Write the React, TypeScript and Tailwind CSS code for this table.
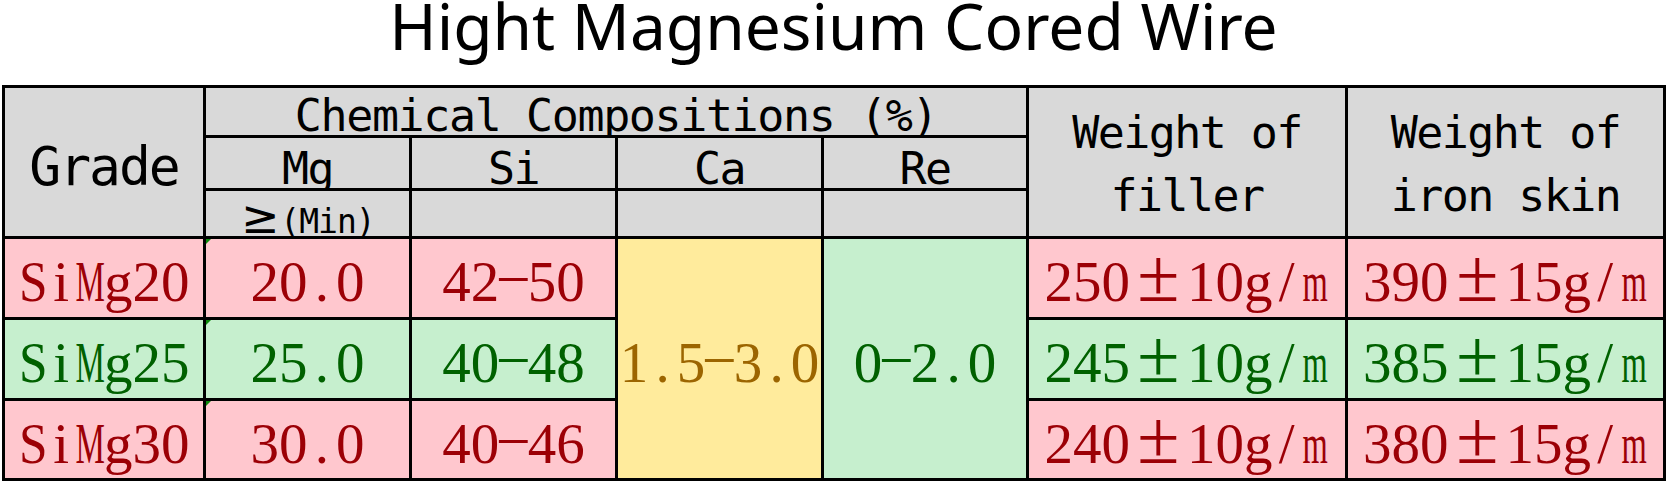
import React from "react";

const PINK = "bg-[#ffc7ce] text-[#9c0006]";
const GREEN = "bg-[#c6efce] text-[#006100]";
const YELLOW = "bg-[#ffeb9c] text-[#9c6500]";

function Mono({ text }: { text: string }) {
  return (
    <span className="whitespace-nowrap">
      {Array.from(text).map((ch, i) => {
        let cls = "inline-flex justify-center w-[0.5em]";
        if (ch === "±") cls = "inline-flex justify-center w-[1em] scale-135 origin-[50%_79%]";
        else if (ch === "M") cls += " scale-x-58";
        else if (ch === "m") cls += " scale-x-57";
        else if (ch === "S") cls += " scale-x-90";
        else if (ch === "-") cls += " scale-x-195 scale-y-70 -translate-y-[6px]";
        return (
          <span key={i} className={cls}>
            {ch}
          </span>
        );
      })}
    </span>
  );
}

function DataCell({
  text,
  tone,
  extra = "",
  mark = false,
}: {
  text: string;
  tone: string;
  extra?: string;
  mark?: boolean;
}) {
  return (
    <div
      className={`relative flex items-center justify-center pt-[8px] text-[57px] leading-[66px] font-['Liberation_Serif',serif] ${tone} ${extra}`}
    >
      {mark && (
        <span className="absolute left-0 top-0 h-0 w-0 border-t-[5px] border-r-[5px] border-t-[#0a8a0a] border-r-transparent" />
      )}
      <Mono text={text} />
    </div>
  );
}

const head = "bg-[#d9d9d9] text-black font-['DejaVu_Sans_Mono',monospace]";

export default function App() {
  const rows = [
    { grade: "SiMg20", mg: "20.0", si: "42-50", filler: "250±10g/m", skin: "390±15g/m", tone: PINK },
    { grade: "SiMg25", mg: "25.0", si: "40-48", filler: "245±10g/m", skin: "385±15g/m", tone: GREEN },
    { grade: "SiMg30", mg: "30.0", si: "40-46", filler: "240±10g/m", skin: "380±15g/m", tone: PINK },
  ];

  return (
    <div className="w-[1667px] h-[483px] overflow-hidden bg-white">
      <div className="h-[85px] text-center text-[64px] leading-[52px] text-black font-['Noto_Sans',sans-serif]">
        Hight Magnesium Cored Wire
      </div>
      <div className="ml-[2px] grid w-fit grid-cols-[198px_203px_203px_203px_202px_316px_315px] grid-rows-[47px_50px_45px_78px_78px_77px] gap-[3px] bg-black p-[3px]">
        <div className={`${head} row-span-3 flex items-center justify-center pt-[9px] text-[53px] leading-[53px] tracking-[-2px]`}>
          Grade
        </div>
        <div className={`${head} col-span-4 overflow-hidden text-center text-[45px] leading-[56px] tracking-[-1.4px] whitespace-pre`}>
          Chemical Compositions (%)
        </div>
        <div className={`${head} row-span-3 flex flex-col items-center justify-center pt-[4px] text-[45px] leading-[63px] tracking-[-1.6px] whitespace-pre`}>
          <span>Weight of</span>
          <span>filler</span>
        </div>
        <div className={`${head} row-span-3 flex flex-col items-center justify-center pt-[4px] text-[45px] leading-[63px] tracking-[-1.6px] whitespace-pre`}>
          <span>Weight of</span>
          <span>iron skin</span>
        </div>

        {["Mg", "Si", "Ca", "Re"].map((t) => (
          <div key={t} className={`${head} overflow-hidden text-center text-[45px] leading-[61px] tracking-[-1.6px]`}>
            {t}
          </div>
        ))}

        <div className={`${head} overflow-hidden text-center text-[33px] leading-[62px] tracking-[-1px]`}>
          <span className="inline-block w-[40px] text-center text-[46px] leading-none tracking-normal font-['DejaVu_Sans',sans-serif]">≥</span>(Min)
        </div>
        <div className={head} />
        <div className={head} />
        <div className={head} />

        {rows.map((r, idx) => (
          <React.Fragment key={r.grade}>
            <DataCell text={r.grade} tone={r.tone} />
            <DataCell text={r.mg} tone={r.tone} mark />
            <DataCell text={r.si} tone={r.tone} />
            {idx === 0 && <DataCell text="1.5-3.0" tone={YELLOW} extra="row-span-3" />}
            {idx === 0 && <DataCell text="0-2.0" tone={GREEN} extra="row-span-3" />}
            <DataCell text={r.filler} tone={r.tone} />
            <DataCell text={r.skin} tone={r.tone} />
          </React.Fragment>
        ))}
      </div>
    </div>
  );
}
